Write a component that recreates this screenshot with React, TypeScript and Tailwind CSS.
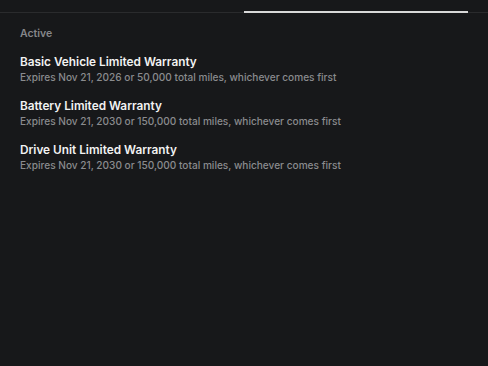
export default function App() {
  const items = [
    { t: "Basic Vehicle Limited Warranty", s: "Expires Nov 21, 2026 or 50,000 total miles, whichever comes first" },
    { t: "Battery Limited Warranty", s: "Expires Nov 21, 2030 or 150,000 total miles, whichever comes first" },
    { t: "Drive Unit Limited Warranty", s: "Expires Nov 21, 2030 or 150,000 total miles, whichever comes first" },
  ];
  return (
    <div className="w-[488px] h-[366px] bg-[#17181a] overflow-hidden" style={{ fontFamily: "Inter, 'Noto Sans', sans-serif" }}>
      <div className="relative h-[13px] border-b border-[#2a2b2d]">
        <div className="absolute left-[244px] w-[224px] bottom-[-1px] h-[2px] bg-[#d8d8d8]" />
      </div>
      <div className="px-5 pt-[14px]">
        <div className="text-[10.5px] font-semibold text-[#86878a] leading-[14px]">Active</div>
        <div className="mt-[13px] flex flex-col gap-[14px]">
          {items.map((it) => (
            <div key={it.t}>
              <div className="text-[11.8px] font-semibold text-[#f2f2f2] leading-[16px]">{it.t}</div>
              <div className="text-[10.1px] font-medium text-[#8a8b8e] leading-[14px]">{it.s}</div>
            </div>
          ))}
        </div>
      </div>
    </div>
  );
}
